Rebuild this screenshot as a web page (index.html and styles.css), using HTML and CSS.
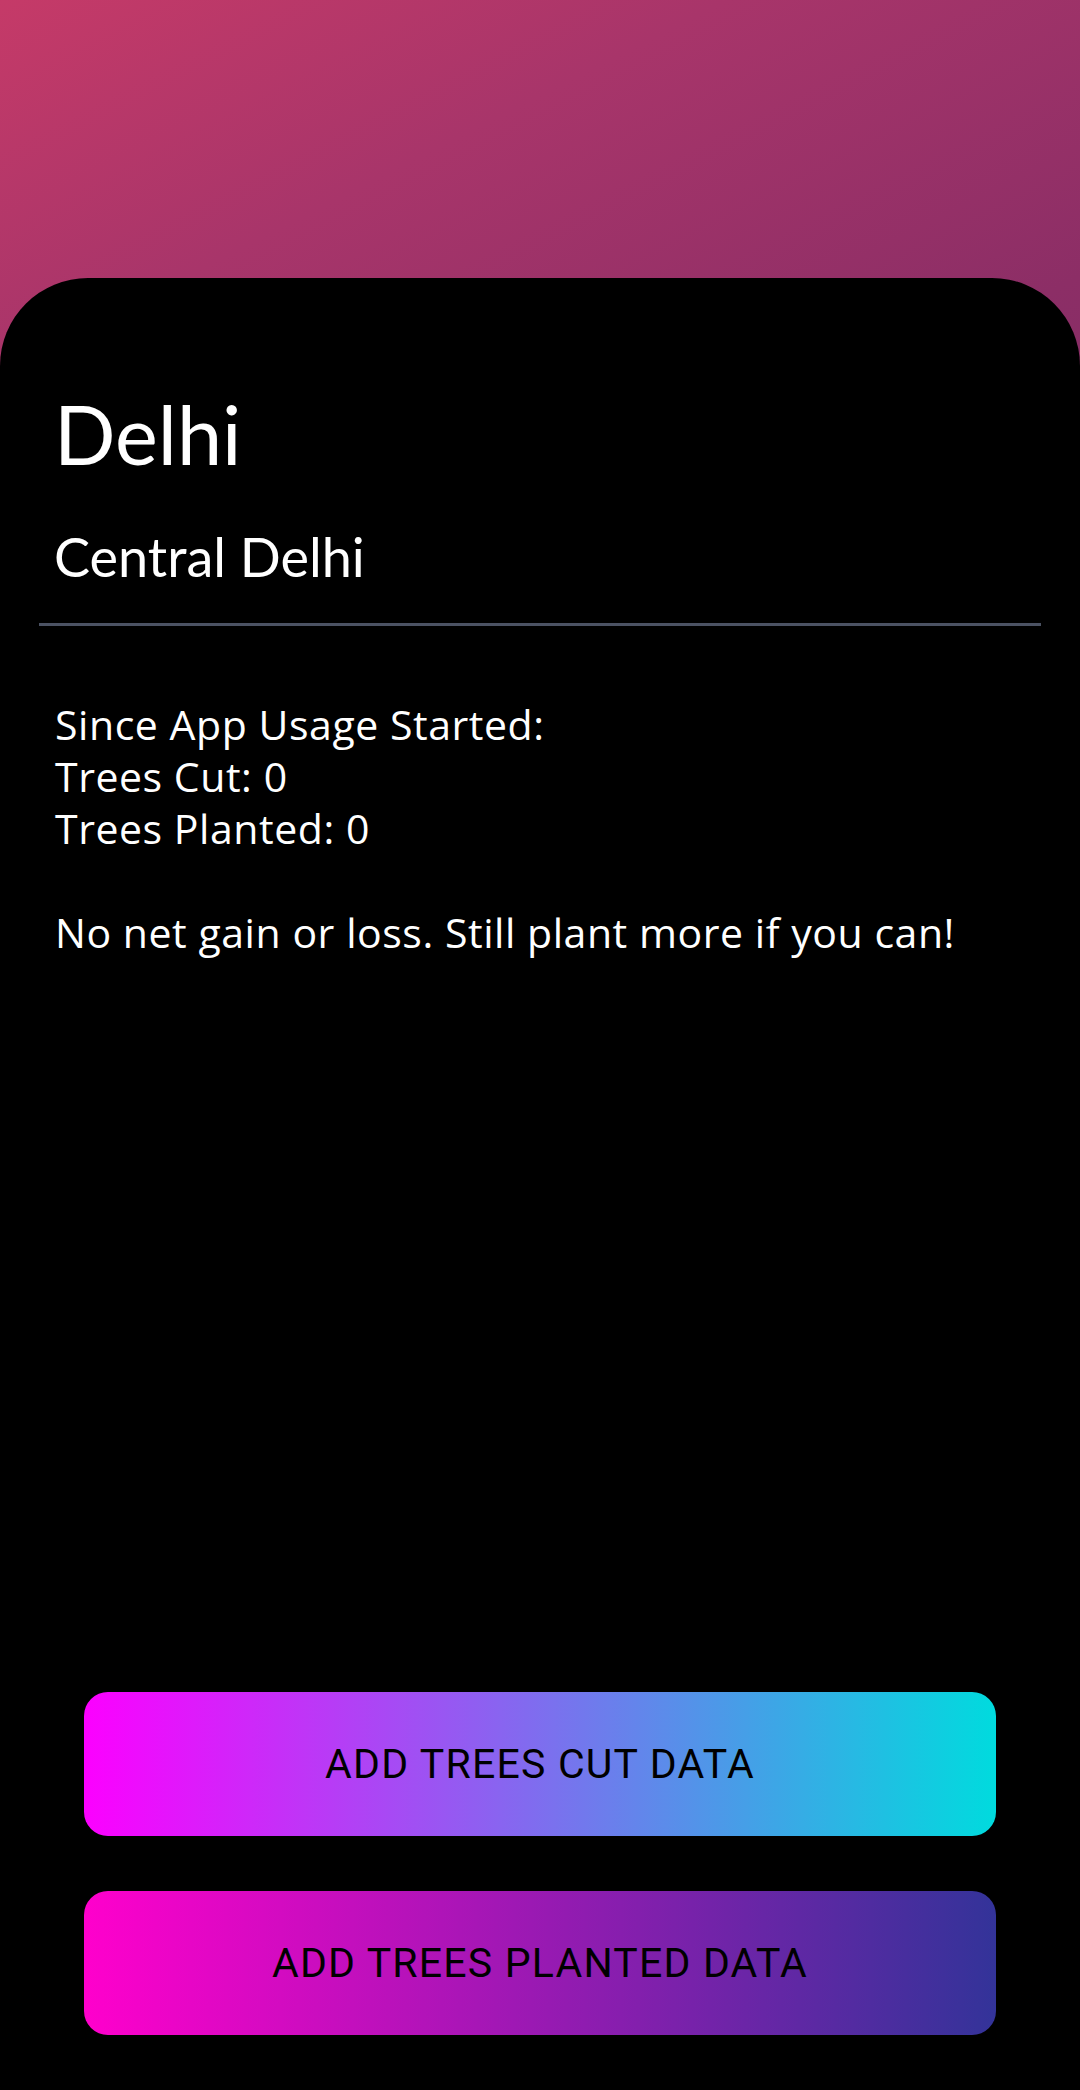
FILE: index.html
```html
<!DOCTYPE html>
<html lang="en">
<head>
<meta charset="utf-8">
<title>Delhi</title>
<link rel="stylesheet" href="styles.css">
</head>
<body>
<div class="screen">
  <div class="hero"></div>
  <main class="card">
    <h1 class="city">Delhi</h1>
    <h2 class="district">Central Delhi</h2>
    <hr class="divider">
    <p class="stats">Since App Usage Started:<br>Trees Cut: 0<br>Trees Planted: 0<br><br>No net gain or loss. Still plant more if you can!</p>
    <div class="actions">
      <button class="btn btn-cut">ADD TREES CUT DATA</button>
      <button class="btn btn-plant">ADD TREES PLANTED DATA</button>
    </div>
  </main>
</div>
</body>
</html>
```
FILE: styles.css
```css
html, body {
  margin: 0;
  padding: 0;
  background: #000;
}
.screen {
  width: 1080px;
  height: 2090px;
  display: flex;
  flex-direction: column;
  background-color: #000;
  background-image: linear-gradient(153deg, #c53a68 0%, #a8356a 39%, #8c2e66 87%, #872d66 100%);
  background-size: 1080px 400px;
  background-repeat: no-repeat;
  font-family: Lato, "Open Sans", sans-serif;
  color: #fff;
}
.hero {
  height: 278px;
  flex: none;
}
.card {
  flex: 1;
  background: #000;
  border-radius: 88px 88px 0 0;
  display: flex;
  flex-direction: column;
  padding: 106px 0 55px;
}
.city {
  margin: 0 54px;
  font-size: 81px;
  line-height: 100px;
  font-weight: 400;
}
.district {
  margin: 38px 54px 0;
  font-size: 54px;
  line-height: 70px;
  font-weight: 400;
}
.divider {
  margin: 31px 39px 0;
  border: 0;
  height: 3px;
  background: #4b5263;
}
.stats {
  margin: 72px 55px 0;
  font-family: "Open Sans", Lato, sans-serif;
  font-size: 41px;
  line-height: 52px;
  letter-spacing: 0.55px;
}
.actions {
  margin-top: auto;
  padding: 0 84px;
  display: flex;
  flex-direction: column;
  gap: 55px;
}
.btn {
  height: 144px;
  border: 0;
  border-radius: 24px;
  font-family: Roboto, "Noto Sans", sans-serif;
  font-size: 41px;
  letter-spacing: 1.2px;
  color: #000;
  display: flex;
  align-items: center;
  justify-content: center;
  padding: 0;
}
.btn-cut {
  background: linear-gradient(to right, #fc00ff, #00dbde);
}
.btn-plant {
  background: linear-gradient(to right, #ff00cc, #333399);
}
```
